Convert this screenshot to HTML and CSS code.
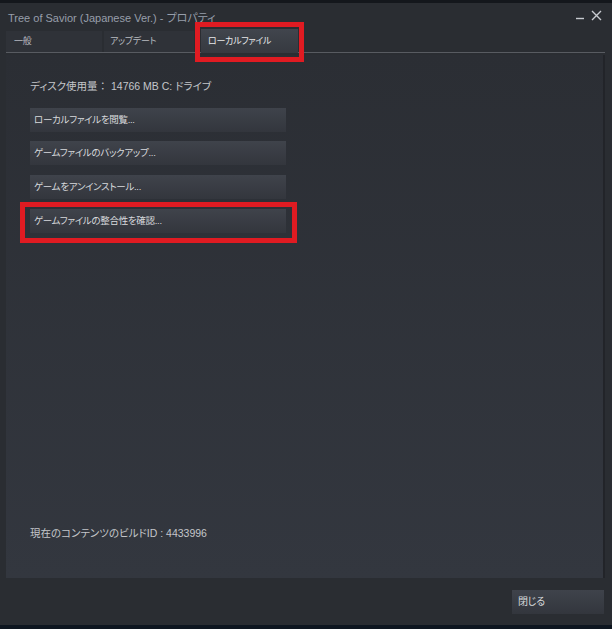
FILE: index.html
```html
<!DOCTYPE html>
<html lang="ja">
<head>
<meta charset="utf-8">
<link rel="stylesheet" href="styles.css">
</head>
<body>
<div class="window">
  <div class="topstrip"></div>
  <div class="titlebar">
    <span class="title">Tree of Savior (Japanese Ver.) - プロパティ</span>
    <div class="controls">
      <svg class="ctl-min" width="8" height="8" viewBox="0 0 8 8"><path d="M0 6.5H8" stroke="#c8cbd0" stroke-width="1.4"/></svg>
      <svg class="ctl-close" width="11" height="11" viewBox="0 0 11 11"><path d="M1 1L10 10M10 1L1 10" stroke="#c8cbd0" stroke-width="1.4"/></svg>
    </div>
  </div>
  <div class="tabs">
    <div class="tab">一般</div>
    <div class="tab tab-2">アップデート</div>
    <div class="tab tab-active">ローカルファイル</div>
  </div>
  <div class="divider"></div>
  <div class="body-row">
    <div class="panel">
      <div class="disk">ディスク使用量<span class="fw">：</span> 14766 MB C: ドライブ</div>
      <div class="buttons">
        <div class="btn">ローカルファイルを閲覧...</div>
        <div class="btn">ゲームファイルのバックアップ...</div>
        <div class="btn">ゲームをアンインストール...</div>
        <div class="btn btn-marked">ゲームファイルの整合性を確認...</div>
      </div>
      <div class="spacer"></div>
      <div class="build">現在のコンテンツのビルドID : 4433996</div>
    </div>
    <div class="rightedge"></div>
  </div>
  <div class="footer">
    <div class="btn close">閉じる</div>
  </div>
  <div class="bottomstrip"></div>
</div>
</body>
</html>
```

FILE: styles.css
```css
html, body {
  margin: 0;
  padding: 0;
  background: #2a2d32;
}
.window {
  width: 612px;
  height: 629px;
  display: flex;
  flex-direction: column;
  background: #2a2d32;
  font-family: "Liberation Sans", "Noto Sans CJK JP", sans-serif;
  font-feature-settings: "palt";
  font-size: 11px;
  color: #c4c6ca;
  overflow: hidden;
}
.topstrip {
  height: 3px;
  background: #14171c;
  flex: none;
}
.titlebar {
  height: 26px;
  flex: none;
  display: flex;
  align-items: center;
  padding: 0 10px 0 8px;
  justify-content: space-between;
}
.title {
  font-size: 11px;
  color: #979eaa;
  padding-top: 2px;
}
.controls {
  display: flex;
  align-items: center;
  gap: 7px;
  margin-bottom: 1px;
}
.tabs {
  display: flex;
  padding-left: 6px;
  margin-top: 2px;
  height: 21px;
  flex: none;
  align-items: flex-end;
}
.tab {
  width: 96px;
  height: 21px;
  box-sizing: border-box;
  padding-left: 8px;
  line-height: 21px;
  background: #2f3238;
  color: #b9bcc1;
  font-size: 9px;
  letter-spacing: -0.3px;
}
.tab-2 {
  width: 90px;
  margin-left: 2px;
  padding-left: 6px;
}
.tab-active {
  width: 97px;
  height: 24px;
  margin-left: 7px;
  margin-bottom: -1px;
  padding-left: 7px;
  line-height: 24px;
  background: linear-gradient(#41454d, #363940);
  color: #e8e9eb;
  position: relative;
}
.tab-active::after {
  content: "";
  position: absolute;
  left: -6px;
  right: -6px;
  top: -7px;
  bottom: -9px;
  border: 5px solid #e01b22;
}
.divider {
  height: 1px;
  flex: none;
  margin: 0 7px 0 6px;
  background: #585b61;
}
.body-row {
  flex: 1;
  display: flex;
  padding-top: 2px;
}
.panel {
  margin-left: 6px;
  width: 597px;
  display: flex;
  flex-direction: column;
  padding: 23px 0 38px 24px;
  box-sizing: border-box;
  background: linear-gradient(#2b2e34, #33373f);
}
.rightedge {
  width: 2px;
  background: #222429;
}
.disk {
  font-size: 10.5px;
  color: #c4c6ca;
}
.fw {
  font-feature-settings: normal;
}
.buttons {
  display: flex;
  flex-direction: column;
  margin-top: 15px;
  gap: 9px;
}
.btn {
  width: 256px;
  height: 24px;
  box-sizing: border-box;
  padding-left: 4px;
  line-height: 24px;
  font-size: 9.5px;
  letter-spacing: -0.3px;
  color: #d8dadd;
  background: linear-gradient(#3f434b, #33363d);
  position: relative;
}
.btn:nth-child(3) {
  margin-top: 1px;
}
.btn-marked {
  margin-top: 1px;
}
.btn-marked::after {
  content: "";
  position: absolute;
  left: -10px;
  top: -7px;
  right: -11px;
  bottom: -10px;
  border: 5px solid #e01b22;
}
.spacer {
  flex: 1;
}
.build {
  font-size: 10.5px;
  color: #c4c6ca;
}
.footer {
  height: 47px;
  flex: none;
  display: flex;
  justify-content: flex-end;
  align-items: flex-start;
  padding: 12px 8px 0 0;
  box-sizing: border-box;
}
.close {
  width: 92px;
  padding-left: 6px;
  font-size: 10px;
}
.bottomstrip {
  height: 4px;
  flex: none;
  background: #0e1620;
}
```
